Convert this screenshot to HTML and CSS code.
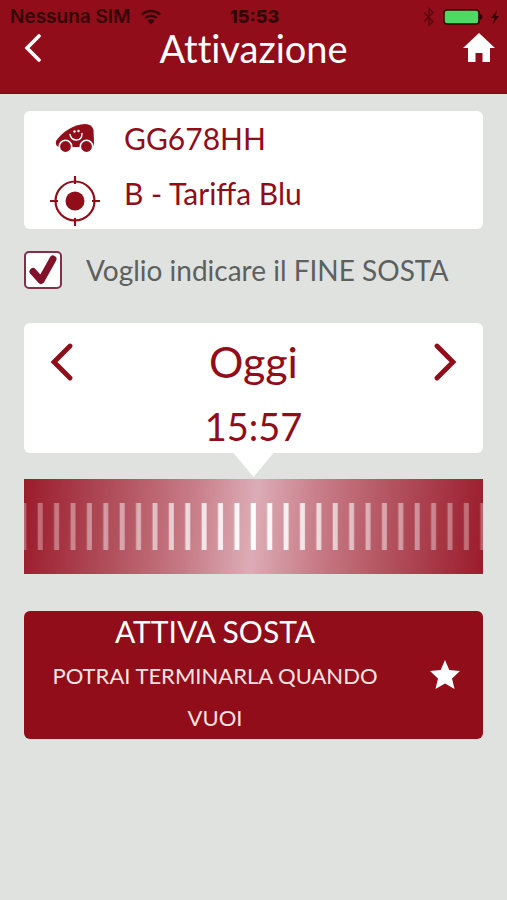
FILE: index.html
```html
<!DOCTYPE html>
<html lang="it">
<head>
<meta charset="utf-8">
<meta name="viewport" content="width=device-width, initial-scale=1">
<title>Attivazione</title>
<link rel="stylesheet" href="styles.css">
</head>
<body>
<header class="header">
  <div class="status">
    <div class="carrier">
      <span>Nessuna SIM</span>
      <svg width="20" height="16" viewBox="0 0 20 16" fill="none" stroke="currentColor" stroke-width="2.4" aria-hidden="true"><path d="M1 5.6a13 13 0 0 1 18 0M4.3 9a8.3 8.3 0 0 1 11.4 0"/><path d="M10 15.5 6.5 11.8a5 5 0 0 1 7 0z" fill="currentColor" stroke="none"/></svg>
    </div>
    <span class="clock">15:53</span>
    <div class="power">
      <svg class="bluetooth" width="12" height="20" viewBox="0 0 12 20" fill="none" stroke="currentColor" stroke-width="1.4" aria-hidden="true"><path d="m1 5.5 9 9-4 4V1.5l4 4-9 9"/></svg>
      <svg width="40" height="16" viewBox="0 0 40 16" aria-hidden="true"><rect x="1" y="1" width="35" height="14" rx="3" fill="#4fd964" stroke="#350408" stroke-width="1.6"/><path d="M37 5q2.500.5 2.500 3T37 11z" fill="#350408"/></svg>
      <svg width="8" height="14" viewBox="0 0 8 14" fill="currentColor" aria-hidden="true"><path d="M6 0 0 8h3.300L2 14l6-8H4.700z"/></svg>
    </div>
  </div>
  <nav class="nav">
    <button class="icon-button back" type="button" aria-label="Indietro"><svg width="18" height="28" viewBox="0 0 18 28" fill="none" stroke="#fff" stroke-width="3.600" stroke-linecap="round"><path d="M15 2 3 14l12 12"/></svg></button>
    <h1 class="title">Attivazione</h1>
    <a class="icon-button home" href="#" aria-label="Home"><svg width="32" height="30" viewBox="0 0 32 30" fill="#fff"><path d="M16 0 0 15h5v14h7.500v-9h7v9H27V15h5z"/></svg></a>
  </nav>
</header>
<main class="content">
  <section class="card details">
    <svg width="40" height="30" viewBox="0 0 40 30" aria-hidden="true">
      <path d="M1 18C6 10 19 1 30 1q7 0 8.500 6L39 20q0 4-3 4H4q-4-1-3-6z" fill="#900d19"/>
      <g fill="#900d19" stroke="#fff" stroke-width="1.600"><circle cx="10.500" cy="23.500" r="6.200"/><circle cx="31.500" cy="23.500" r="6.200"/></g>
      <path d="M15 11.500q1 5.500 6.500 5.500T27 10.500" fill="none" stroke="#fff" stroke-width="1.400" stroke-linecap="round"/>
      <g fill="#fff"><circle cx="19.500" cy="8.500" r="1.200"/><circle cx="23.500" cy="8" r="1.200"/></g>
    </svg>
    <span>GG678HH</span>
    <svg width="50" height="50" viewBox="0 0 50 50" fill="none" stroke="#900d19" stroke-width="2.200" aria-hidden="true"><circle cx="25" cy="25" r="19.500"/><path d="M25 0v8M25 42v8M0 25h8M42 25h8"/><circle cx="25" cy="25" r="9.500" fill="#900d19" stroke="none"/></svg>
    <span class="tariff">B - Tariffa Blu</span>
  </section>
  <label class="option">
    <span class="check">
      <input type="checkbox" checked>
      <svg width="30" height="32" viewBox="0 0 30 32" fill="none" stroke="#82122a" stroke-width="7" stroke-linecap="round" stroke-linejoin="round" aria-hidden="true"><path d="m5 17.500 8 9L25 5"/></svg>
    </span>
    <span>Voglio indicare il FINE SOSTA</span>
  </label>
  <section class="card picker">
    <div class="day">
      <button class="icon-button" type="button" aria-label="Giorno precedente"><svg width="24" height="38" viewBox="0 0 24 38" fill="none" stroke="#900d19" stroke-width="4.800" stroke-linecap="round"><path d="M20 3 4 19l16 16"/></svg></button>
      <h2>Oggi</h2>
      <button class="icon-button" type="button" aria-label="Giorno successivo"><svg width="24" height="38" viewBox="0 0 24 38" fill="none" stroke="#900d19" stroke-width="4.800" stroke-linecap="round"><path d="m4 3 16 16L4 35"/></svg></button>
    </div>
    <time class="time">15:57</time>
  </section>
  <input class="dial" type="range" min="0" max="100" value="50" aria-label="Orario di fine sosta">
  <button class="activate" type="button">
    <span class="labels">
      <span class="primary">ATTIVA SOSTA</span>
      <span class="secondary">POTRAI TERMINARLA QUANDO VUOI</span>
    </span>
    <svg width="30" height="30" viewBox="0 0 30 30" fill="#fff" aria-hidden="true"><path d="m15 0 4.300 10 10.700 1-8 7.500L24.500 29 15 23.500 5.500 29 8 18.500 0 11l10.700-1z"/></svg>
  </button>
</main>
</body>
</html>
```
FILE: styles.css
```css
* {
  box-sizing: border-box;
}

body {
  margin: 0;
  min-height: 100vh;
  background: #dfe2df;
  color: #900d19;
  font-family: Lato, sans-serif;
}

h1,
h2 {
  margin: 0;
  font-weight: 400;
}

svg {
  display: block;
}

button {
  border: 0;
  font: inherit;
  cursor: pointer;
}

.header {
  background: #900d19;
  border-bottom: 1px solid #780a14;
}

.status {
  display: grid;
  grid-template-columns: 1fr auto 1fr;
  align-items: center;
  height: 28px;
  padding: 6px 8px 0 10px;
  color: #350408;
  font: 600 19px/20px Inter, sans-serif;
}

.carrier,
.power {
  display: flex;
  align-items: center;
  gap: 10px;
}

.power {
  justify-content: flex-end;
  gap: 8px;
}

.bluetooth {
  opacity: 0.6;
}

.clock {
  font-size: 18px;
  font-weight: 800;
}

.nav {
  display: grid;
  grid-template-columns: 1fr auto 1fr;
  align-items: center;
  height: 65px;
  padding: 0 12px 25px;
}

.icon-button {
  display: block;
  justify-self: start;
  padding: 0;
  background: none;
}

.back {
  padding-left: 12px;
}

.home {
  justify-self: end;
}

.title {
  color: #fff;
  font-size: 38px;
  font-variant-ligatures: none;
  line-height: 40px;
}

.content {
  display: flex;
  flex-direction: column;
  padding: 17px 24px;
}

.card {
  background: #fff;
  border-radius: 6px;
}

.details {
  display: grid;
  grid-template-columns: 50px 1fr;
  gap: 14px 24px;
  align-items: center;
  justify-items: start;
  padding: 3px 26px;
  font-size: 30px;
  line-height: 48px;
}

.details svg {
  justify-self: center;
}

.details .tariff {
  align-self: start;
  line-height: 34px;
}

.option {
  display: flex;
  align-items: center;
  gap: 24px;
  padding: 22px 0 34px;
  color: #5c605f;
  font-size: 28px;
  line-height: 38px;
}

.check {
  display: grid;
  place-items: center;
}

.check > * {
  grid-area: 1 / 1;
}

.check input {
  appearance: none;
  width: 38px;
  height: 38px;
  margin: 0;
  border: 2px solid #82304a;
  border-radius: 5px;
  background: #fff;
}

.check svg {
  position: relative;
  pointer-events: none;
}

.picker {
  position: relative;
  padding: 12px 26px 0;
  text-align: center;
}

.picker::after {
  content: "";
  position: absolute;
  top: 100%;
  left: 50%;
  width: 40px;
  height: 24px;
  background: #fff;
  clip-path: polygon(0 0, 100% 0, 50% 100%);
  transform: translateX(-50%);
}

.day {
  display: flex;
  align-items: center;
  justify-content: space-between;
}

.day h2 {
  font-size: 43px;
  line-height: 54px;
}

.time {
  display: block;
  padding-top: 10px;
  font-size: 38px;
  line-height: 54px;
}

.dial {
  appearance: none;
  display: block;
  width: 100%;
  height: 95px;
  margin: 26px 0 37px;
  background: linear-gradient(95deg, #9b1c2b, #b45562 22%, #c77b86 36%, #dcacb6 50%, #c77b86 64%, #b45562 78%, #9b1c2b);
}

.dial::-webkit-slider-runnable-track {
  height: 47px;
  background: linear-gradient(90deg, transparent 5px, #fff 6px 10px, transparent 11px) center / calc(100% / 28) 100%;
  mask-image: linear-gradient(90deg, rgb(0 0 0 / 0.3), rgb(0 0 0 / 0.5) 25%, #000 50%, rgb(0 0 0 / 0.5) 75%, rgb(0 0 0 / 0.3));
}

.dial::-webkit-slider-thumb {
  appearance: none;
  width: 16px;
  height: 47px;
  background: transparent;
}

.activate {
  display: flex;
  align-items: center;
  justify-content: space-between;
  gap: 50px;
  padding: 0 23px 0 26px;
  border-radius: 6px;
  background: #900d19;
  color: #fff;
}

.labels {
  flex: 1;
  text-align: center;
}

.primary,
.secondary {
  display: block;
}

.primary {
  padding-bottom: 4px;
  font-size: 30px;
  line-height: 40px;
}

.secondary {
  color: #ffe3e1;
  font-size: 22px;
  line-height: 42px;
}
```
